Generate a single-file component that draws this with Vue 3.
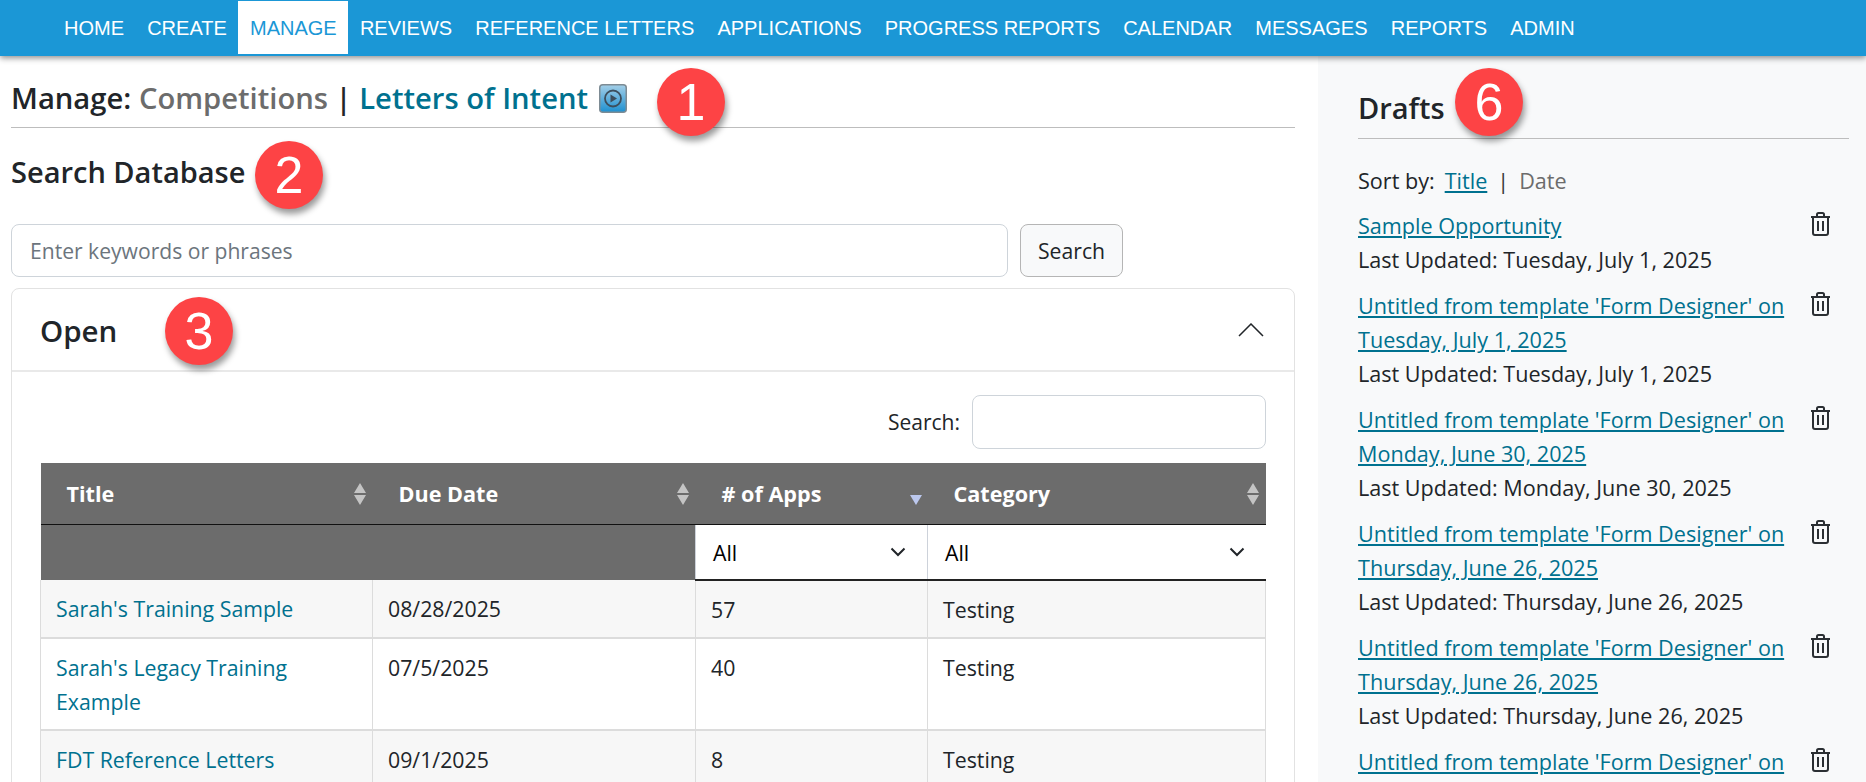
<script setup>
const nav = ['HOME','CREATE','MANAGE','REVIEWS','REFERENCE LETTERS','APPLICATIONS','PROGRESS REPORTS','CALENDAR','MESSAGES','REPORTS','ADMIN']
const rows = [
  { title: "Sarah's Training Sample", due: '08/28/2025', apps: '57', cat: 'Testing' },
  { title: "Sarah's Legacy Training Example", due: '07/5/2025', apps: '40', cat: 'Testing' },
  { title: 'FDT Reference Letters', due: '09/1/2025', apps: '8', cat: 'Testing' },
]
const drafts = [
  { title: 'Sample Opportunity', updated: 'Tuesday, July 1, 2025' },
  { title: "Untitled from template 'Form Designer' on Tuesday, July 1, 2025", updated: 'Tuesday, July 1, 2025' },
  { title: "Untitled from template 'Form Designer' on Monday, June 30, 2025", updated: 'Monday, June 30, 2025' },
  { title: "Untitled from template 'Form Designer' on Thursday, June 26, 2025", updated: 'Thursday, June 26, 2025' },
  { title: "Untitled from template 'Form Designer' on Thursday, June 26, 2025", updated: 'Thursday, June 26, 2025' },
  { title: "Untitled from template 'Form Designer' on" },
]
const callouts = [
  { n: '1', cls: 'c1' }, { n: '2', cls: 'c2' }, { n: '3', cls: 'c3' }, { n: '6', cls: 'c6' },
]
</script>

<template>
  <div class="page">
    <nav class="nav">
      <a v-for="n in nav" :key="n" class="nav-item" :class="{ active: n === 'MANAGE' }">{{ n }}</a>
    </nav>
    <div class="body">
      <main class="main">
        <h1 class="title">
          <span>Manage:</span> <span class="muted">Competitions</span> | <a class="link">Letters of Intent</a>
          <svg class="play" viewBox="0 0 28 29" width="28" height="29">
            <defs>
              <linearGradient id="pg" x1="0" y1="0" x2="0" y2="1">
                <stop offset="0" stop-color="#a4cfe8" /><stop offset="1" stop-color="#1e90d0" />
              </linearGradient>
            </defs>
            <rect x="0.75" y="0.75" width="26.5" height="27.5" rx="3" fill="url(#pg)" stroke="#7d8b94" stroke-width="1.5" />
            <circle cx="14" cy="14.5" r="8" fill="none" stroke="#3d4e5c" stroke-width="1.8" />
            <path d="M11.5 10.5 L18 14.5 L11.5 18.5 Z" fill="#3d4e5c" />
          </svg>
        </h1>
        <h2 class="subtitle">Search Database</h2>
        <div class="search-row">
          <input class="search-input" placeholder="Enter keywords or phrases" />
          <button class="search-btn">Search</button>
        </div>
        <section class="card">
          <header class="card-head">
            <h3>Open</h3>
            <svg class="collapse" viewBox="0 0 26 14" width="26" height="14">
              <path d="M1 13 L13 1 L25 13" fill="none" stroke="#212529" stroke-width="1.5" />
            </svg>
          </header>
          <div class="card-body">
            <div class="filter-row">
              <label>Search:</label>
              <input class="filter-input" />
            </div>
            <table class="table">
              <colgroup>
                <col class="c-a" /><col class="c-b" /><col class="c-c" /><col class="c-d" />
              </colgroup>
              <thead>
                <tr class="head">
                  <th>Title<svg class="sort" viewBox="0 0 12 22" width="12" height="22"><path d="M6 0 L12 10 H0 Z M6 22 L0 12 H12 Z" fill="#c4c4c4" /></svg></th>
                  <th>Due Date<svg class="sort" viewBox="0 0 12 22" width="12" height="22"><path d="M6 0 L12 10 H0 Z M6 22 L0 12 H12 Z" fill="#c4c4c4" /></svg></th>
                  <th># of Apps<svg class="sort down" viewBox="0 0 12 10" width="12" height="10"><path d="M6 10 L0 0 H12 Z" fill="#bcc8ee" /></svg></th>
                  <th>Category<svg class="sort" viewBox="0 0 12 22" width="12" height="22"><path d="M6 0 L12 10 H0 Z M6 22 L0 12 H12 Z" fill="#c4c4c4" /></svg></th>
                </tr>
                <tr class="filters">
                  <th colspan="2"></th>
                  <th class="sel">
                    <div class="select"><span>All</span><svg viewBox="0 0 16 10" width="16" height="10"><path d="M1.5 1.5 L8 8 L14.5 1.5" fill="none" stroke="#212529" stroke-width="2" /></svg></div>
                  </th>
                  <th class="sel">
                    <div class="select"><span>All</span><svg viewBox="0 0 16 10" width="16" height="10"><path d="M1.5 1.5 L8 8 L14.5 1.5" fill="none" stroke="#212529" stroke-width="2" /></svg></div>
                  </th>
                </tr>
              </thead>
              <tbody>
                <tr v-for="(r, i) in rows" :key="r.title" :class="{ odd: i % 2 === 0 }">
                  <td><a class="link">{{ r.title }}</a></td>
                  <td>{{ r.due }}</td>
                  <td>{{ r.apps }}</td>
                  <td>{{ r.cat }}</td>
                </tr>
              </tbody>
            </table>
          </div>
        </section>
      </main>
      <aside class="side">
        <h2 class="drafts">Drafts</h2>
        <div class="sort-by">
          <span>Sort by:</span>
          <a class="ulink">Title</a>
          <span class="sep">|</span>
          <span class="muted">Date</span>
        </div>
        <div v-for="(d, i) in drafts" :key="i" class="draft">
          <div class="draft-text">
            <a class="ulink">{{ d.title }}</a>
            <div v-if="d.updated">Last Updated: {{ d.updated }}</div>
          </div>
          <svg class="trash" viewBox="0 0 20 24" width="21" height="24">
            <path d="M0.5 5 H19.5 M6.5 5 V2.5 Q6.5 1 8 1 H12 Q13.5 1 13.5 2.5 V5" fill="none" stroke="#2b2f33" stroke-width="2" />
            <path d="M2.5 5 V21 Q2.5 23 4.5 23 H15.5 Q17.5 23 17.5 21 V5" fill="none" stroke="#2b2f33" stroke-width="2" />
            <path d="M7.5 9 V19 M12.5 9 V19" fill="none" stroke="#2b2f33" stroke-width="2" />
          </svg>
        </div>
      </aside>
    </div>
    <div v-for="c in callouts" :key="c.n" class="callout" :class="c.cls">{{ c.n }}</div>
  </div>
</template>

<style>
html, body { margin: 0; overflow: hidden; }
</style>

<style scoped>
.page {
  position: relative;
  height: 782px;
  overflow: hidden;
  background: #fff;
  color: #212529;
  font-family: "Open Sans", "Noto Sans", sans-serif;
  font-size: 21.6px;
}
.nav {
  position: relative;
  z-index: 2;
  height: 56px;
  background: #1b97d6;
  box-shadow: 0 2px 6px rgba(0,0,0,.45);
  display: flex;
  padding: 1px 0 0 52.4px;
  box-sizing: border-box;
  font-family: "Liberation Sans", Arial, sans-serif;
  font-size: 20px;
}
.nav-item {
  color: #fff;
  height: 53px;
  line-height: 54px;
  padding: 0 11.6px;
  white-space: nowrap;
}
.nav-item.active { background: #fff; color: #1b97d6; }
.body { display: flex; height: 726px; }
.main { width: 1318px; box-sizing: border-box; padding: 0 23px 0 11px; flex: none; }
.side { flex: 1; background: #f8f9fa; padding: 0 17px 0 40px; }
.title {
  margin: 0;
  height: 72px;
  padding-top: 21px;
  box-sizing: border-box;
  border-bottom: 1px solid #bdbdbd;
  font-size: 29.2px;
  font-weight: 600;
  line-height: 42px;
  white-space: nowrap;
}
.muted { color: #6c6c6c; }
.link { color: #00718f; }
.play { vertical-align: -4px; margin-left: 11px; }
.subtitle {
  margin: 0;
  height: 96px;
  padding-top: 24px;
  box-sizing: border-box;
  font-size: 29px;
  font-weight: 600;
  line-height: 40px;
}
.search-row { display: flex; gap: 12px; height: 53px; }
.search-input {
  width: 997px;
  box-sizing: border-box;
  border: 1px solid #ced4da;
  border-radius: 8px;
  padding: 0 18px;
  font: inherit;
  font-size: 21.1px;
  outline: none;
}
.search-input::placeholder { color: #6c757d; }
.search-btn {
  width: 103px;
  border: 1px solid #b5b5b5;
  border-radius: 8px;
  background: #f8f9fa;
  color: #212529;
  font: inherit;
  font-size: 21.2px;
  padding: 0;
}
.card {
  margin-top: 11px;
  width: 1284px;
  box-sizing: border-box;
  border: 1px solid #e2e2e2;
  border-radius: 8px;
  height: 600px;
}
.card-head {
  height: 83px;
  box-sizing: border-box;
  border-bottom: 2px solid #e9e9e9;
  display: flex;
  align-items: center;
  justify-content: space-between;
  padding: 2px 30px 0 28px;
}
.card-head h3 { margin: 0; font-size: 29.5px; font-weight: 600; }
.collapse { margin-top: -2px; }
.card-body { padding: 23px 28px 0; }
.filter-row {
  display: flex;
  justify-content: flex-end;
  align-items: center;
  gap: 12px;
  height: 54px;
  margin-bottom: 14px;
  font-size: 21px;
}
.filter-input {
  width: 294px;
  height: 54px;
  box-sizing: border-box;
  border: 1px solid #ced4da;
  border-radius: 8px;
  outline: none;
}
.table {
  width: 1225px;
  table-layout: fixed;
  border-collapse: collapse;
  font-size: 21.3px;
}
.c-a { width: 332px; }
.c-b { width: 323px; }
.c-c { width: 232px; }
.c-d { width: 338px; }
.head th {
  position: relative;
  height: 61px;
  background: #6c6c6c;
  color: #fff;
  font-weight: 700;
  font-size: 21.6px;
  text-align: left;
  padding: 0 0 0 26px;
  border-bottom: 1px solid #111;
}
.sort { position: absolute; right: 7px; top: 20px; }
.sort.down { top: 32px; right: 6px; }
.filters th { height: 54px; background: #6c6c6c; padding: 0; }
.filters th.sel { background: #fff; border-left: 1px solid #cdd2da; border-bottom: 2px solid #222; font-weight: 400; }
.select {
  display: flex;
  align-items: center;
  justify-content: space-between;
  padding: 0 21px 0 17px;
  color: #000;
}
td {
  vertical-align: top;
  padding: 12px 15px 10px;
  line-height: 34px;
  border: 1px solid #dcdcdc;
  border-bottom-width: 2px;
  border-top: 0;
  text-align: left;
}
.odd td { background: #f7f7f7; }
.drafts {
  margin: 0;
  height: 83px;
  padding-top: 32px;
  box-sizing: border-box;
  font-size: 29px;
  font-weight: 600;
  line-height: 40px;
  border-bottom: 1px solid #bdbdbd;
}
.sort-by {
  display: flex;
  gap: 10px;
  line-height: 34px;
  margin: 25px 0 11px;
}
.sep { color: #333; }
.ulink { color: #00718f; text-decoration: underline; }
.draft {
  display: flex;
  justify-content: space-between;
  align-items: flex-start;
  line-height: 34px;
  margin-bottom: 12px;
  padding-right: 18px;
}
.draft-text { width: 440px; }
.trash { margin-top: 3px; }
.callout {
  position: absolute;
  z-index: 3;
  width: 68px;
  height: 68px;
  border-radius: 50%;
  background: #fd4345;
  color: #fff;
  font-family: "Liberation Sans", Arial, sans-serif;
  font-size: 52px;
  line-height: 68px;
  text-align: center;
  box-shadow: 2px 5px 6px rgba(0,0,0,.4);
}
.c1 { left: 657px; top: 68px; }
.c2 { left: 255px; top: 141px; }
.c3 { left: 165px; top: 297px; }
.c6 { left: 1455px; top: 68px; }
</style>
